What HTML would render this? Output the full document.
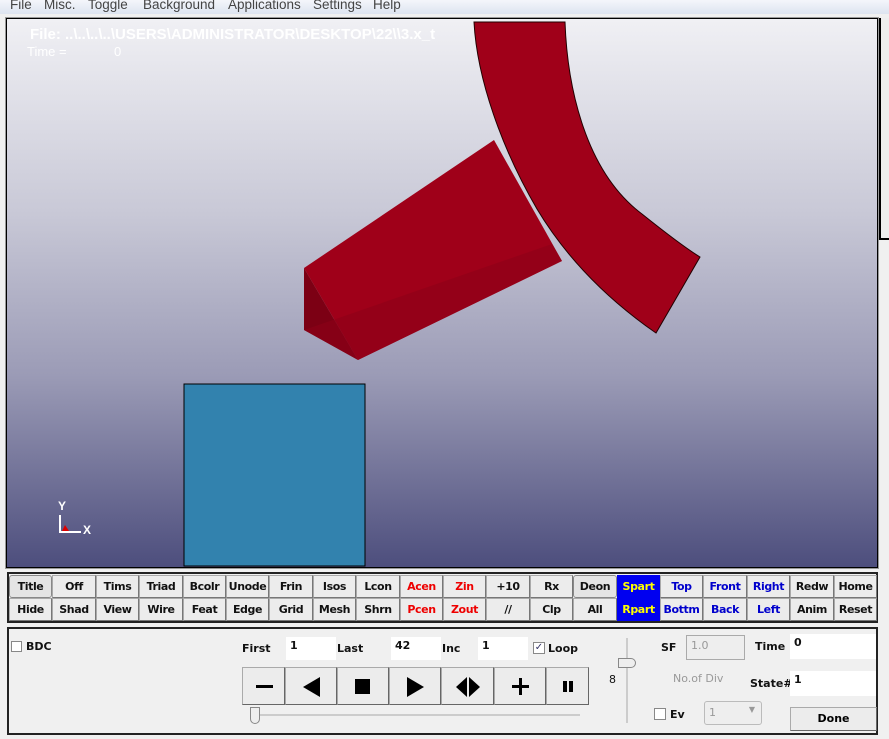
<!DOCTYPE html>
<html><head><meta charset="utf-8"><style>
*{margin:0;padding:0;box-sizing:border-box}
body{width:889px;height:739px;overflow:hidden;background:#f0f0f0;font-family:"DejaVu Sans","Liberation Sans",sans-serif;position:relative}
.a{position:absolute}
.menu{left:0;top:0;width:889px;height:14px;background:linear-gradient(#f4f6fb,#dde4f0);font-family:"Liberation Sans",sans-serif;font-size:13.5px;color:#444;line-height:12px}
.menu span{position:absolute;top:-1px}
.vp{left:6px;top:18px;width:872px;height:550px;border:1px solid #000;outline:1px solid #999;background:linear-gradient(#f0f0f4 0%,#c9c9d7 35%,#9b9bb6 65%,#4d4e7d 100%);overflow:hidden}
.bar{left:7px;top:572px;width:871px;height:51px;border:2px solid #222;background:#f0f0f0}
.b{position:absolute;height:23px;border:1px solid #aaa;border-right-color:#777;border-bottom-color:#777;background:#ececec;font-weight:bold;font-size:11px;letter-spacing:-0.4px;text-align:center;line-height:21px;color:#111;white-space:nowrap;overflow:hidden}
.p{left:7px;top:627px;width:871px;height:108px;border:2px solid #222;background:#f0f0f0}
.l{font-weight:bold;font-size:11px;color:#111}
.in{background:#fff;height:23px;font-weight:bold;font-size:11px;padding:2px 4px;color:#111}
.pb{position:absolute;top:667px;height:38px;border:1px solid #aaa;border-right-color:#666;border-bottom-color:#666;background:#ececec}
</style></head><body>
<div class="a menu"><span style="left:10px">File</span><span style="left:44px">Misc.</span><span style="left:88px">Toggle</span><span style="left:143px">Background</span><span style="left:228px">Applications</span><span style="left:313px">Settings</span><span style="left:373px">Help</span></div>
<div class="a vp">
<svg width="872" height="550" style="position:absolute;left:0;top:0">
<path d="M297 249 L487 121 L555 242 L351 341 Z" fill="#9f0019"/>
<path d="M297 249 L297 311 L351 341 Z" fill="#7c0014"/>
<path d="M297 311 L351 341 L555 242 L545 225 Z" fill="#8e0017" opacity="0.6"/>
<path d="M467 3 L558 3 C560 60 575 150 635 195 C660 215 680 230 693 238 L649 314 C600 280 560 240 530 190 C495 130 470 60 467 3 Z" fill="#a00019" stroke="#200" stroke-width="1"/>
<rect x="177" y="365" width="181" height="182" fill="#3282ae" stroke="#000" stroke-width="1"/>
<text x="23" y="20" fill="#fff" font-family="Liberation Sans" font-size="15" font-weight="bold">File: ..\..\..\..\USERS\ADMINISTRATOR\DESKTOP\22\\3.x_t</text>
<text x="20" y="37" fill="#fff" font-family="Liberation Sans" font-size="13">Time =</text>
<text x="107" y="37" fill="#fff" font-family="Liberation Sans" font-size="13">0</text>
<text x="51" y="491" fill="#fff" font-family="Liberation Sans" font-size="12" font-weight="bold">Y</text>
<text x="76" y="515" fill="#fff" font-family="Liberation Sans" font-size="12" font-weight="bold">X</text>
<path d="M53 496 V513 H74" stroke="#fff" stroke-width="2" fill="none"/>
<path d="M55 512 L58 506 L62 512 Z" fill="#d00"/>
</svg>
</div>
<div class="a" style="left:879px;top:18px;width:10px;height:222px;border-left:2px solid #000;border-bottom:2px solid #000;background:#eee"></div>
<div class="a bar"></div>
<div id="btns"></div>
<div class="a p"></div>
<div class="a" style="left:11px;top:641px;width:11px;height:11px;border:1px solid #888;background:#fff"></div>
<div class="a l" style="left:26px;top:640px">BDC</div>
<div class="a l" style="left:242px;top:642px">First</div>
<div class="a in" style="left:286px;top:637px;width:50px">1</div>
<div class="a l" style="left:337px;top:642px">Last</div>
<div class="a in" style="left:391px;top:637px;width:50px">42</div>
<div class="a l" style="left:442px;top:642px">Inc</div>
<div class="a in" style="left:478px;top:637px;width:50px">1</div>
<div class="a" style="left:533px;top:642px;width:12px;height:12px;border:1px solid #888;background:#fff;font-size:10px;line-height:10px;color:#336;text-align:center">✓</div>
<div class="a l" style="left:548px;top:642px">Loop</div>
<div class="pb" style="left:242px;width:43px"><div class="a" style="left:13px;top:17px;width:17px;height:3px;background:#000"></div></div>
<div class="pb" style="left:285px;width:52px"><div class="a" style="left:17px;top:9px;border-right:17px solid #000;border-top:10px solid transparent;border-bottom:10px solid transparent"></div></div>
<div class="pb" style="left:337px;width:52px"><div class="a" style="left:17px;top:11px;width:15px;height:15px;background:#000"></div></div>
<div class="pb" style="left:389px;width:52px"><div class="a" style="left:17px;top:9px;border-left:17px solid #000;border-top:10px solid transparent;border-bottom:10px solid transparent"></div></div>
<div class="pb" style="left:441px;width:53px"><div class="a" style="left:14px;top:9px;border-right:11px solid #000;border-top:10px solid transparent;border-bottom:10px solid transparent"></div><div class="a" style="left:27px;top:9px;border-left:11px solid #000;border-top:10px solid transparent;border-bottom:10px solid transparent"></div></div>
<div class="pb" style="left:494px;width:52px"><div class="a" style="left:17px;top:17px;width:17px;height:3px;background:#000"></div><div class="a" style="left:24px;top:10px;width:3px;height:17px;background:#000"></div></div>
<div class="pb" style="left:546px;width:43px"><div class="a" style="left:16px;top:13px;width:4px;height:11px;background:#000"></div><div class="a" style="left:22px;top:13px;width:4px;height:11px;background:#000"></div></div>
<div class="a" style="left:252px;top:714px;width:328px;height:2px;background:#ccc"></div>
<div class="a" style="left:250px;top:707px;width:10px;height:17px;border:1px solid #888;border-radius:0 0 5px 5px;background:#eee"></div>
<div class="a" style="left:626px;top:638px;width:2px;height:85px;background:#ccc"></div>
<div class="a" style="left:618px;top:658px;width:18px;height:10px;border:1px solid #888;border-radius:0 5px 5px 0;background:#eee"></div>
<div class="a l" style="left:609px;top:673px;font-weight:normal">8</div>
<div class="a l" style="left:661px;top:641px">SF</div>
<div class="a" style="left:686px;top:635px;width:59px;height:25px;border:1px solid #aaa;background:#eee;font-size:11px;color:#999;padding:3px 4px">1.0</div>
<div class="a" style="left:673px;top:672px;font-size:11px;color:#999">No.of Div</div>
<div class="a" style="left:654px;top:708px;width:12px;height:12px;border:1px solid #888;background:#fff"></div>
<div class="a l" style="left:670px;top:708px">Ev</div>
<div class="a" style="left:704px;top:701px;width:58px;height:24px;border:1px solid #bbb;border-radius:3px;background:#eee;font-size:11px;color:#999;padding:4px 4px">1<span style="position:absolute;right:6px;top:3px;font-size:8px">▼</span></div>
<div class="a l" style="left:755px;top:640px">Time</div>
<div class="a in" style="left:790px;top:634px;width:86px;height:25px">0</div>
<div class="a l" style="left:750px;top:677px">State#</div>
<div class="a in" style="left:790px;top:671px;width:86px;height:25px">1</div>
<div class="a" style="left:790px;top:707px;width:87px;height:24px;border:1px solid #aaa;border-right-color:#666;border-bottom-color:#666;background:#ececec;font-weight:bold;font-size:11px;text-align:center;line-height:22px">Done</div>
<script>
var t=["Title","Off","Tims","Triad","Bcolr","Unode","Frin","Isos","Lcon","Acen","Zin","+10","Rx","Deon","Spart","Top","Front","Right","Redw","Home"];
var b=["Hide","Shad","View","Wire","Feat","Edge","Grid","Mesh","Shrn","Pcen","Zout","//","Clp","All","Rpart","Bottm","Back","Left","Anim","Reset"];
var h="";
for(var i=0;i<20;i++){var x=Math.round(9+i*43.4),w=Math.round(9+(i+1)*43.4)-x;
[[t,575],[b,598]].forEach(function(r){var s="",lab=r[0][i];
if(i==9||i==10)s="color:#e00;";if(i>=15&&i<=17)s="color:#00c;";
if(i==14)s="color:#ff0;background:#0000f0;border-color:#0000f0;";
if((i==0||i==13)&&r[1]==575)s+="border-radius:3px;background:#e4e4e4;border-color:#888;";
h+='<div class="b" style="left:'+x+'px;top:'+r[1]+'px;width:'+w+'px;'+s+'">'+lab+'</div>';});}
document.getElementById("btns").innerHTML=h;
</script>
</body></html>
